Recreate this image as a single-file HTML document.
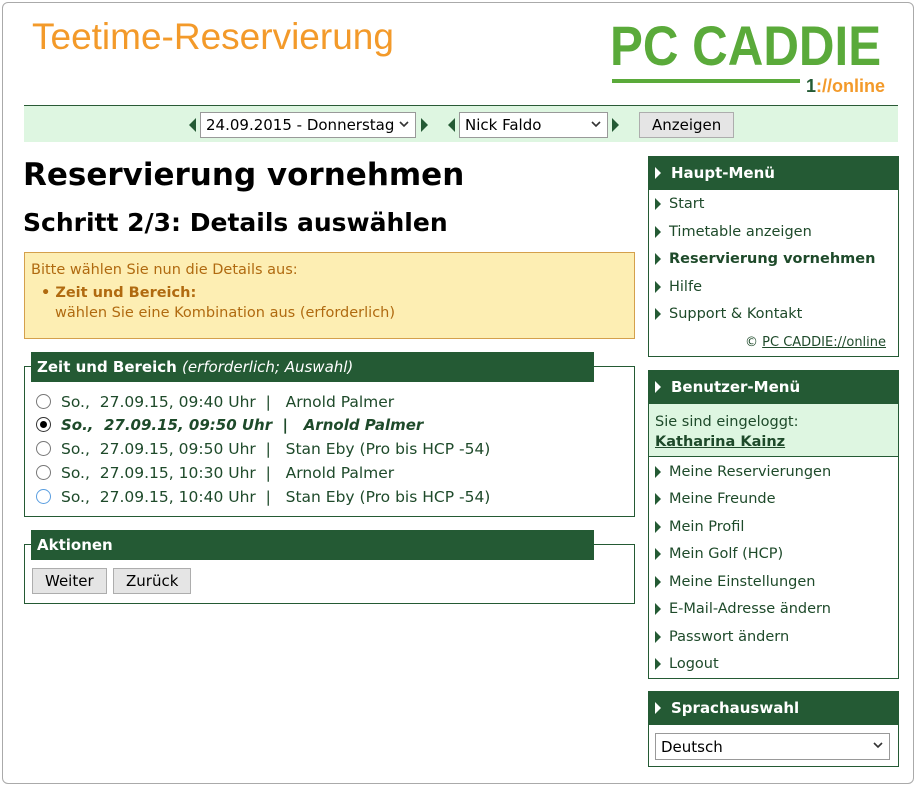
<!DOCTYPE html>
<html><head><meta charset="utf-8"><style>
*{box-sizing:border-box;margin:0;padding:0}
body{width:917px;height:787px;background:#fff;font-family:"DejaVu Sans",Verdana,sans-serif;font-size:14px;color:#1e4a2a;position:relative;overflow:hidden}
.outer{position:absolute;left:2px;top:2px;width:912px;height:782px;border:1px solid #aaa;border-radius:6px}
.a{position:absolute}
.title{left:32px;top:16px;font-family:"Liberation Sans",Arial,sans-serif;font-size:37px;color:#f39a2a;white-space:nowrap}
.logo{left:610px;top:18px;font-family:"Liberation Sans",Arial,sans-serif;font-weight:bold;font-size:56px;color:#5aaa3a;line-height:56px;white-space:nowrap;transform:scaleX(0.88);transform-origin:left}
.nav{left:24px;top:105px;width:874px;height:37px;background:#def6e1;border-top:1px solid #2a5a36}
.sel{position:absolute;height:26px;border:1px solid #999;background:#fff;padding:3px 5px;font-size:15px;color:#000;white-space:nowrap}
.sel svg{position:absolute;right:6px;top:8px}
.tri{position:absolute;width:0;height:0;border-top:7px solid transparent;border-bottom:7px solid transparent}
.tl{border-right:7px solid #245a34}.tr{border-left:7px solid #245a34}
.btn{position:absolute;background:#e5e5e5;border:1px solid #adadad;padding:3px 12px;color:#000;font-size:15px;line-height:18px}
h1{position:absolute;left:23px;top:157px;font-size:31px;font-weight:bold;color:#000;white-space:nowrap}
h2{position:absolute;left:23px;top:208px;font-size:25px;font-weight:bold;color:#000;white-space:nowrap}
.yel{left:24px;top:252px;width:611px;height:87px;background:#fdeeb3;border:1px solid #d4a04c;color:#b06a10;padding:7px 6px;font-size:14.5px;line-height:20px}
.fs{position:absolute;left:24px;width:611px;border:1px solid #245a34}
.leg{position:absolute;left:31px;width:563px;height:30px;background:#245a34;color:#fff;font-weight:bold;font-size:15px;padding:6px 6px;white-space:nowrap}
.row{position:absolute;left:36px;font-size:15.5px;height:20px;white-space:pre}
.rad{display:inline-block;width:15px;height:15px;border:1px solid #777;border-radius:50%;vertical-align:-2px;margin-right:10px;background:#fff;position:relative}
.box{position:absolute;left:648px;width:251px;border:1px solid #245a34}
.bh{position:absolute;left:648px;width:251px;height:34px;background:#245a34;color:#fff;font-weight:bold;font-size:15px;padding:8px 0 0 23px}
.bh:before,.it:before{content:"";position:absolute;left:7px;top:11px;border-top:6px solid transparent;border-bottom:6px solid transparent;border-left:6px solid #fff}
.it{position:absolute;left:648px;padding-left:21px;font-size:14.5px;color:#1e4a2a;white-space:nowrap}
.it:before{border-left-color:#245a34;top:2px}
</style></head><body>
<div class="outer"></div>
<div class="a title">Teetime-Reservierung</div>
<div class="a logo">PC CADDIE</div>
<div class="a" style="left:612px;top:79px;width:188px;height:4px;background:#5aaa3a"></div>
<div class="a" style="left:806px;top:76px;font-family:'Liberation Sans',Arial,sans-serif;font-weight:bold;font-size:18px;color:#f39a2a;white-space:nowrap"><span style="color:#245a34">1</span>://online</div>
<div class="a nav"></div>
<div class="tri tl" style="left:189px;top:118px"></div>
<div class="sel" style="left:200px;top:112px;width:216px">24.09.2015 - Donnerstag<svg width="10" height="7"><path d="M1 1l4 4 4-4" stroke="#333" stroke-width="1.6" fill="none"/></svg></div>
<div class="tri tr" style="left:421px;top:118px"></div>
<div class="tri tl" style="left:448px;top:118px"></div>
<div class="sel" style="left:459px;top:112px;width:149px">Nick Faldo<svg width="10" height="7"><path d="M1 1l4 4 4-4" stroke="#333" stroke-width="1.6" fill="none"/></svg></div>
<div class="tri tr" style="left:612px;top:118px"></div>
<div class="btn" style="left:639px;top:112px">Anzeigen</div>

<h1>Reservierung vornehmen</h1>
<h2>Schritt 2/3: Details auswählen</h2>
<div class="a yel">Bitte wählen Sie nun die Details aus:<div style="padding-left:10px;margin-top:3px"><b>• Zeit und Bereich:</b><br><span style="padding-left:14px">wählen Sie eine Kombination aus (erforderlich)</span></div></div>

<div class="fs" style="top:366px;height:151px"></div>
<div class="leg" style="top:352px">Zeit und Bereich <i style="font-weight:normal">(erforderlich; Auswahl)</i></div>
<div class="row" style="top:393px"><span class="rad"></span>So.,  27.09.15, 09:40 Uhr  |   Arnold Palmer</div>
<div class="row" style="top:416px;font-weight:bold;font-style:italic;font-size:15px"><span class="rad" style="border-color:#333"><span style="position:absolute;left:3px;top:3px;width:7px;height:7px;border-radius:50%;background:#000"></span></span>So.,  27.09.15, 09:50 Uhr  |   Arnold Palmer</div>
<div class="row" style="top:440px"><span class="rad"></span>So.,  27.09.15, 09:50 Uhr  |   Stan Eby (Pro bis HCP -54)</div>
<div class="row" style="top:464px"><span class="rad"></span>So.,  27.09.15, 10:30 Uhr  |   Arnold Palmer</div>
<div class="row" style="top:488px"><span class="rad" style="border-color:#5a9ee0"></span>So.,  27.09.15, 10:40 Uhr  |   Stan Eby (Pro bis HCP -54)</div>

<div class="fs" style="top:544px;height:60px"></div>
<div class="leg" style="top:530px">Aktionen</div>
<div class="btn" style="left:32px;top:568px">Weiter</div>
<div class="btn" style="left:113px;top:568px">Zurück</div>

<div class="box" style="top:156px;height:201px"></div>
<div class="bh" style="top:156px">Haupt-Menü</div>
<div class="it" style="top:196px">Start</div>
<div class="it" style="top:224px">Timetable anzeigen</div>
<div class="it" style="top:251px;font-weight:bold">Reservierung vornehmen</div>
<div class="it" style="top:279px">Hilfe</div>
<div class="it" style="top:306px">Support &amp; Kontakt</div>
<div class="a" style="left:745px;top:335px;font-size:13px;white-space:nowrap">© <u>PC CADDIE://online</u></div>

<div class="box" style="top:370px;height:309px"></div>
<div class="bh" style="top:370px">Benutzer-Menü</div>
<div class="a" style="left:649px;top:404px;width:249px;height:53px;background:#def6e1;border-bottom:1px solid #245a34;padding:8px 6px;font-size:14.5px;line-height:20px">Sie sind eingeloggt:<br><b><u>Katharina Kainz</u></b></div>
<div class="it" style="top:464px">Meine Reservierungen</div>
<div class="it" style="top:491px">Meine Freunde</div>
<div class="it" style="top:519px">Mein Profil</div>
<div class="it" style="top:546px">Mein Golf (HCP)</div>
<div class="it" style="top:574px">Meine Einstellungen</div>
<div class="it" style="top:601px">E-Mail-Adresse ändern</div>
<div class="it" style="top:629px">Passwort ändern</div>
<div class="it" style="top:656px">Logout</div>

<div class="box" style="top:691px;height:76px"></div>
<div class="bh" style="top:691px">Sprachauswahl</div>
<div class="sel" style="left:655px;top:733px;width:235px;height:27px;padding-top:4px">Deutsch<svg width="10" height="7"><path d="M1 1l4 4 4-4" stroke="#333" stroke-width="1.6" fill="none"/></svg></div>
</body></html>
